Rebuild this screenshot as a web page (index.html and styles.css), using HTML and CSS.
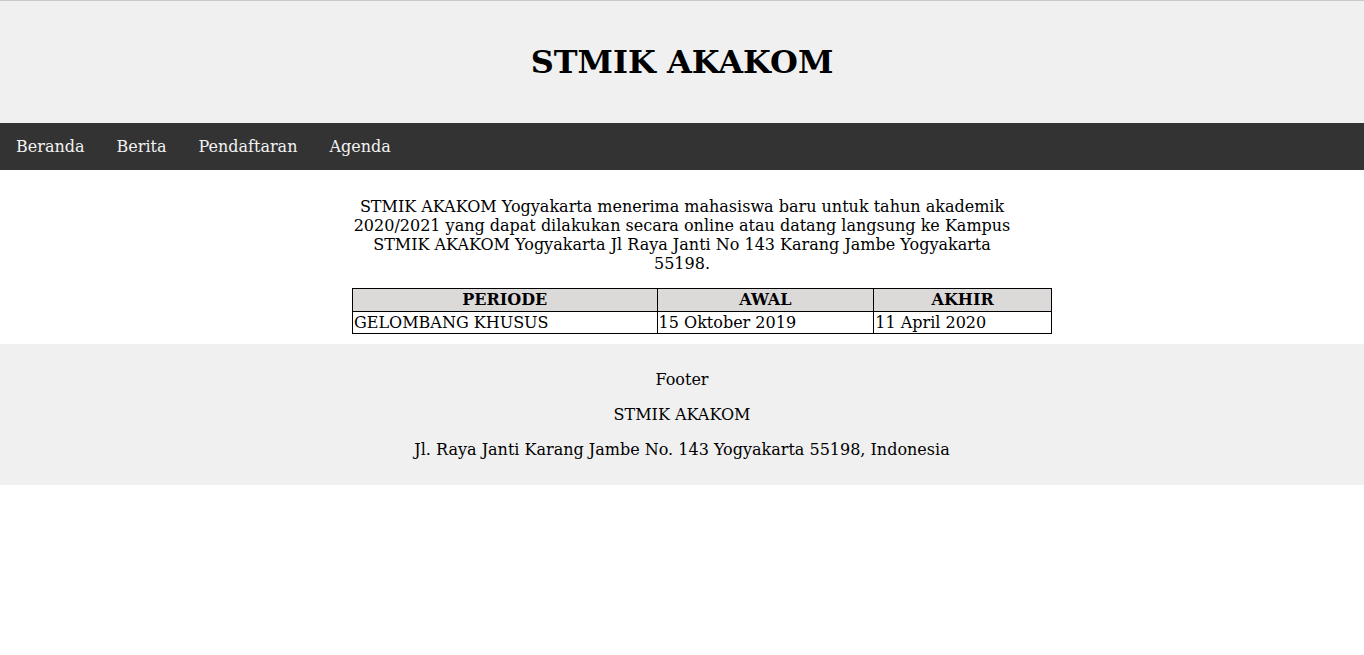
FILE: index.html
```html
<!DOCTYPE html>
<html lang="id">
<head>
<meta charset="utf-8">
<title>STMIK AKAKOM</title>
<link rel="stylesheet" href="styles.css">
</head>
<body>
<header class="header">
  <h1 class="title">STMIK AKAKOM</h1>
</header>
<nav class="nav">
  <a class="nav-link" href="#">Beranda</a>
  <a class="nav-link" href="#">Berita</a>
  <a class="nav-link" href="#">Pendaftaran</a>
  <a class="nav-link" href="#">Agenda</a>
</nav>
<main class="main">
  <p class="intro">STMIK AKAKOM Yogyakarta menerima mahasiswa baru untuk tahun akademik 2020/2021 yang dapat dilakukan secara online atau datang langsung ke Kampus STMIK AKAKOM Yogyakarta Jl Raya Janti No 143 Karang Jambe Yogyakarta 55198.</p>
  <table class="schedule">
    <thead>
      <tr>
        <th class="col-periode">PERIODE</th>
        <th class="col-awal">AWAL</th>
        <th class="col-akhir">AKHIR</th>
      </tr>
    </thead>
    <tbody>
      <tr>
        <td>GELOMBANG KHUSUS</td>
        <td>15 Oktober 2019</td>
        <td>11 April 2020</td>
      </tr>
    </tbody>
  </table>
</main>
<footer class="footer">
  <p class="footer-line">Footer</p>
  <p class="footer-line">STMIK AKAKOM</p>
  <p class="footer-line">Jl. Raya Janti Karang Jambe No. 143 Yogyakarta 55198, Indonesia</p>
</footer>
</body>
</html>
```
FILE: styles.css
```css
* { box-sizing: border-box; }

html, body {
  margin: 0;
  padding: 0;
  background: #ffffff;
}

body {
  font-family: "DejaVu Serif", serif;
  font-size: 16px;
  color: #000;
}

.header {
  background: #f0f0f0;
  border-top: 1px solid #c9c9c3;
  padding: 21px 20px;
  text-align: center;
}

.title {
  margin: 21px 0;
  font-size: 32px;
  font-weight: bold;
  line-height: 38px;
}

.nav {
  display: flex;
  background: #333333;
}

.nav-link {
  display: block;
  padding: 14px 16px;
  color: #f2f2f2;
  text-decoration: none;
  line-height: 19px;
}

.main {
  width: 660px;
  margin: 0 auto;
  padding: 10px 0;
  box-sizing: content-box;
}

.intro {
  margin: 16px 0;
  text-align: center;
  line-height: 19px;
  position: relative;
  top: 1px;
}

.schedule {
  width: 700px;
  border-collapse: collapse;
  line-height: 19px;
}

.schedule th,
.schedule td {
  border: 1px solid #000;
  padding: 1px 1px;
  text-align: left;
}

.schedule th {
  background: #dcd9d9;
  text-align: center;
  font-weight: bold;
  line-height: 20px;
}

.col-periode { width: 305px; }
.col-awal { width: 217px; }
.col-akhir { width: 178px; }

.footer {
  background: #f0f0f0;
  padding: 10px;
  text-align: center;
}

.footer-line {
  margin: 16px 0;
  line-height: 19px;
}
```
